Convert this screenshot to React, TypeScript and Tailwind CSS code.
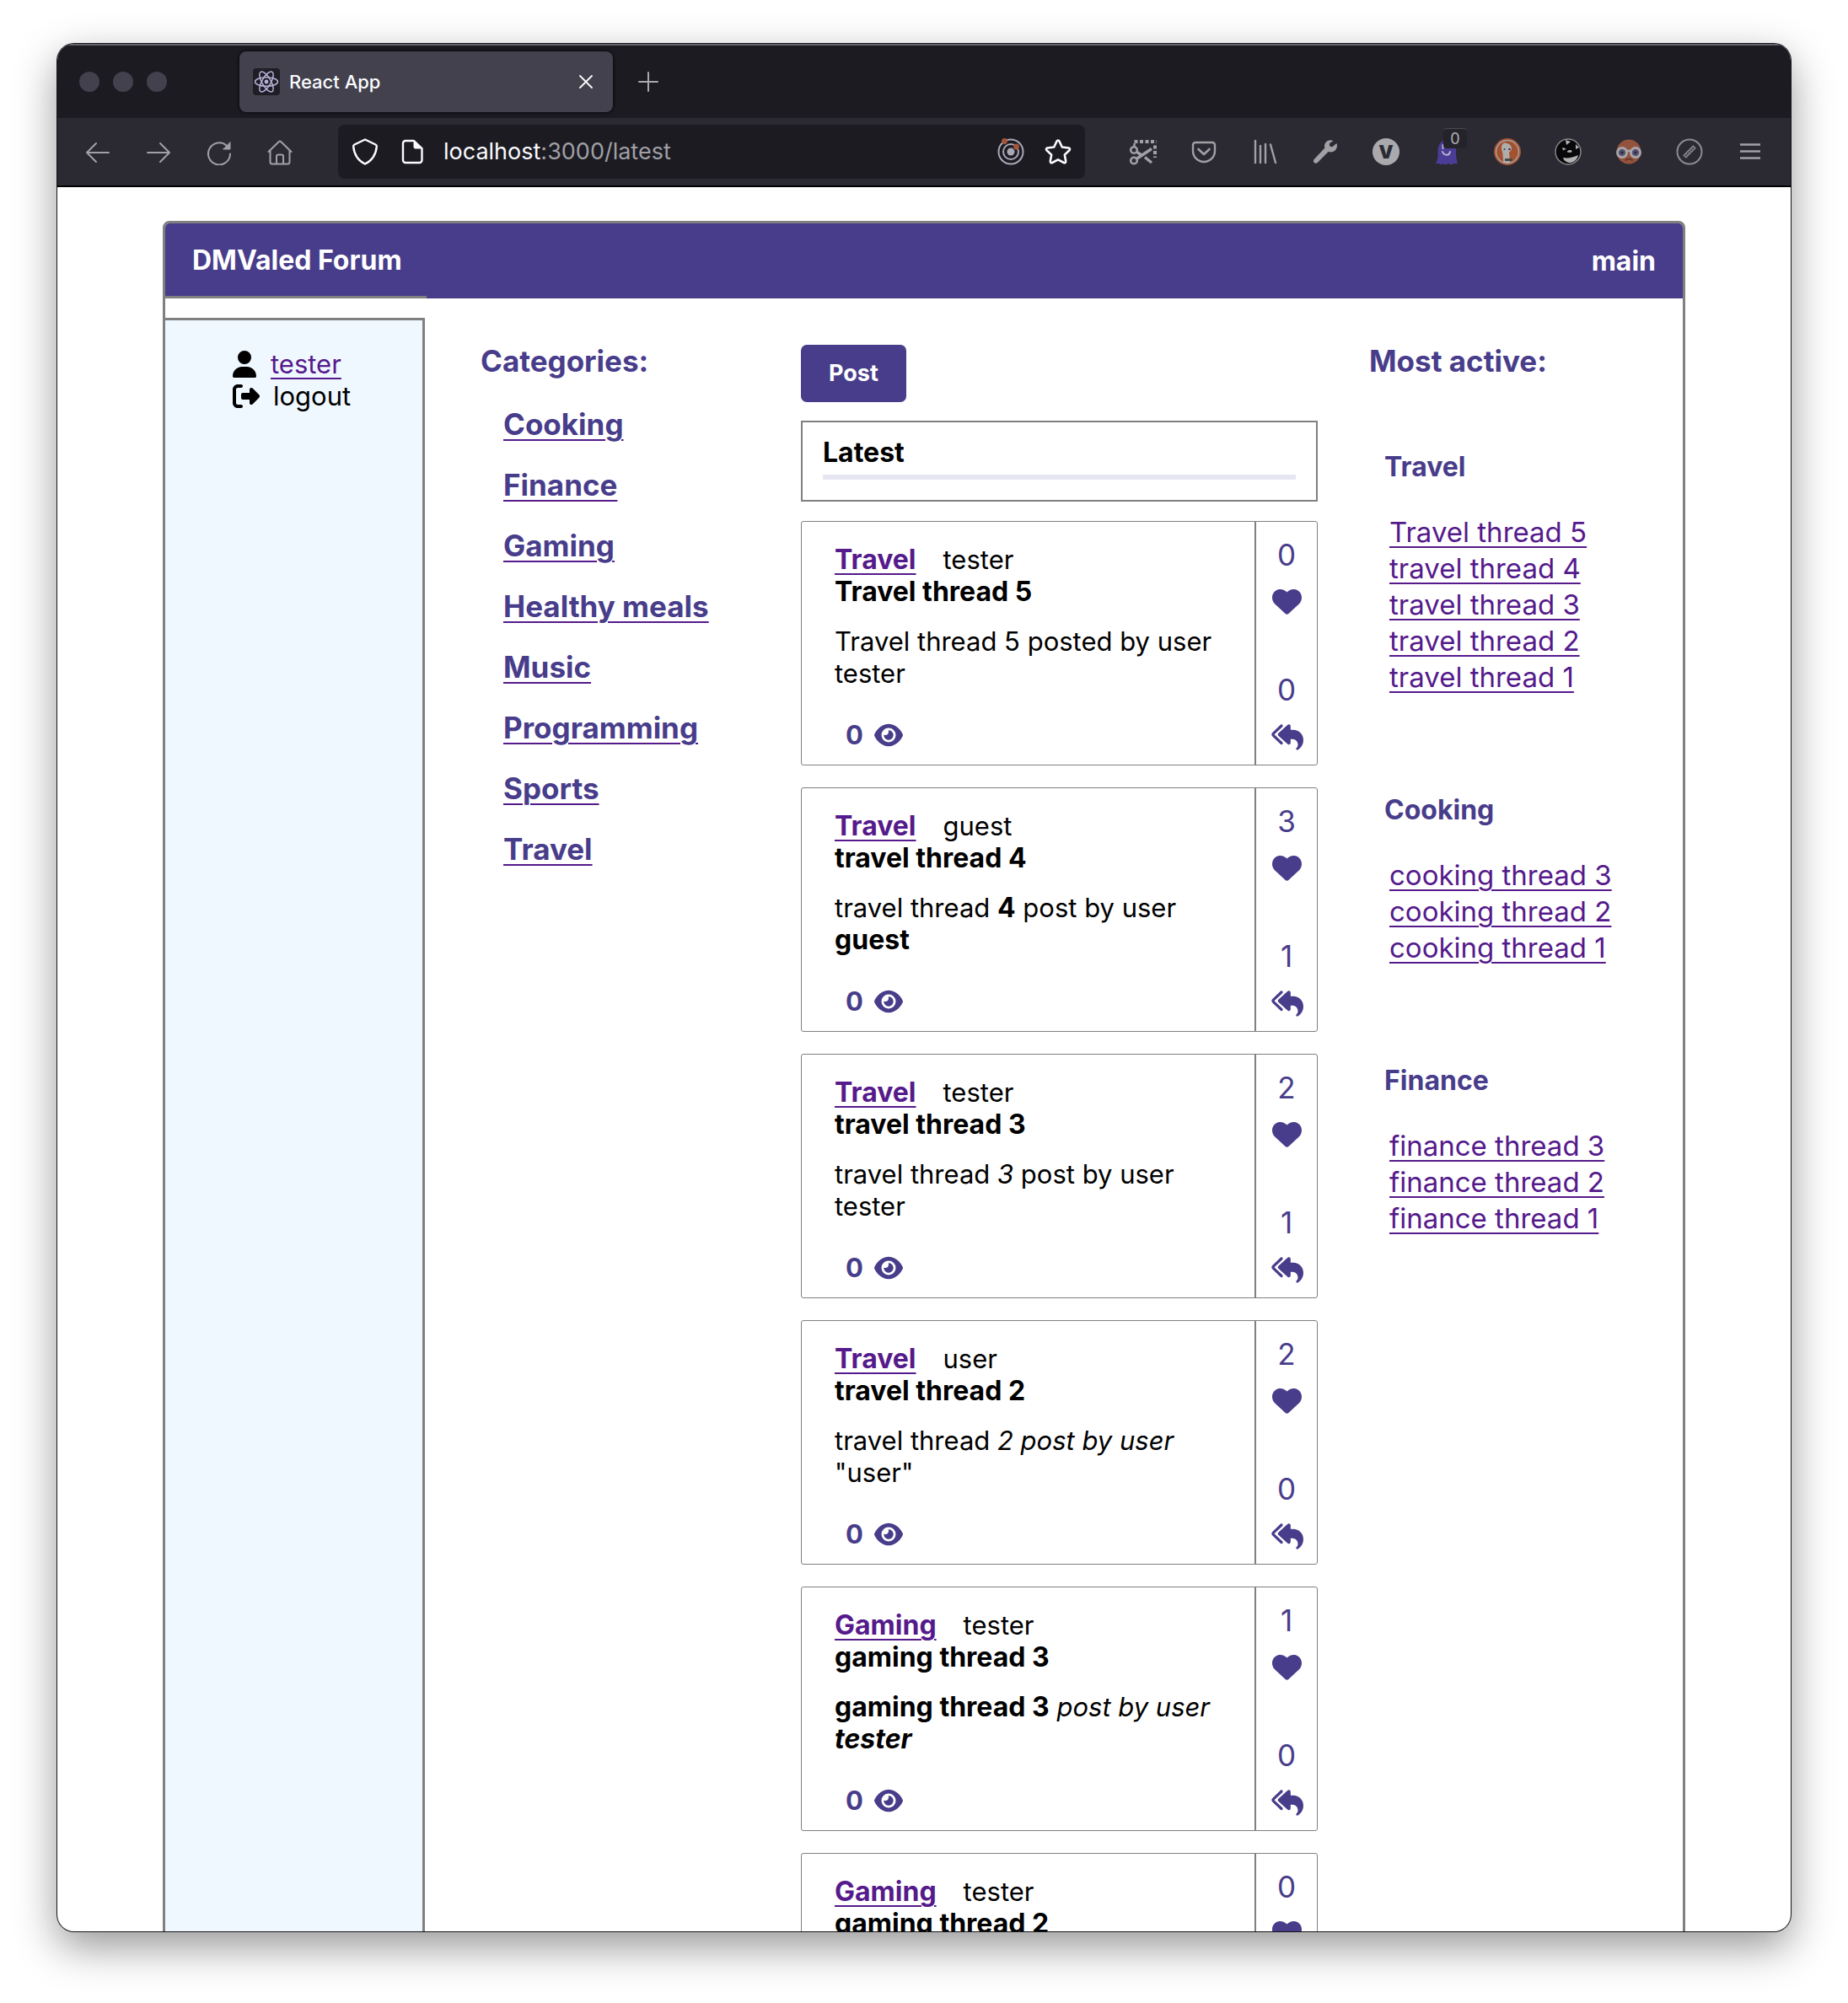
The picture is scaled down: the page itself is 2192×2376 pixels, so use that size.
import type { ReactNode } from "react";
import { FaEye, FaHeart, FaReplyAll, FaRightFromBracket, FaUser } from "react-icons/fa6";

/* ---------- browser icons ---------- */

function Icon({ children, className = "" }: { children: ReactNode; className?: string }) {
  return (
    <svg
      viewBox="0 0 32 32"
      className={`size-8 shrink-0 ${className}`}
      fill="none"
      stroke="currentColor"
      strokeWidth="2"
      strokeLinecap="round"
      strokeLinejoin="round"
      aria-hidden="true"
    >
      {children}
    </svg>
  );
}

const ReactLogo = () => (
  <span className="flex size-8 shrink-0 items-center justify-center rounded bg-[#1f1e26] text-[#b9b1d8]">
    <svg viewBox="0 0 32 32" className="size-8" fill="none" stroke="currentColor" strokeWidth="1.5" aria-hidden="true">
      <ellipse cx="16" cy="16" rx="13.5" ry="5.2" />
      <ellipse cx="16" cy="16" rx="13.5" ry="5.2" transform="rotate(60 16 16)" />
      <ellipse cx="16" cy="16" rx="13.5" ry="5.2" transform="rotate(120 16 16)" />
      <circle cx="16" cy="16" r="2.4" fill="currentColor" stroke="none" />
    </svg>
  </span>
);

const BackIcon = () => (
  <Icon>
    <path d="M29 17H3M14 6 3 17l11 11" />
  </Icon>
);
const ForwardIcon = () => (
  <Icon>
    <path d="M3 17h26M18 6l11 11-11 11" />
  </Icon>
);
const ReloadIcon = () => (
  <Icon>
    <path d="M29 18.5A13 13 0 1 1 25 9" />
    <path d="M29 5v8h-8z" fill="currentColor" strokeWidth="1" />
  </Icon>
);
const HomeIcon = () => (
  <Icon>
    <path d="M2.5 16 14.6 4.200a2 2 0 0 1 2.800 0L29.500 16M4.500 14v14a2.500 2.500 0 0 0 2.500 2.500h18A2.500 2.500 0 0 0 27.500 28V14" />
    <path d="M12 30v-8.500a2 2 0 0 1 2-2h4a2 2 0 0 1 2 2V30" />
  </Icon>
);
const ShieldIcon = () => (
  <Icon className="text-[#fbfbfe]">
    <path strokeWidth="2.400" d="M16 1.500 28.500 7.500c1 .5 1.500 1.200 1.300 2.300C29 18.500 26 25.500 16 30.500 6 25.500 3 18.500 2.200 9.800 2 8.700 2.500 8 3.500 7.500z" />
  </Icon>
);
const PageIcon = () => (
  <Icon className="text-[#fbfbfe]">
    <path strokeWidth="2.400" d="M18 3H8a3 3 0 0 0-3 3v20a3 3 0 0 0 3 3h16.500a3 3 0 0 0 3-3V12z" />
    <path d="M18 3v7.500a1.500 1.500 0 0 0 1.500 1.500h8z" fill="currentColor" strokeWidth="1" />
  </Icon>
);
const ContainerIcon = () => (
  <Icon className="text-[#a9a7b6]">
    <circle cx="16" cy="16" r="14.500" />
    <circle cx="16" cy="16" r="9" />
    <circle cx="16" cy="16" r="4.500" fill="currentColor" stroke="none" />
    <circle cx="8.500" cy="3.500" r="3.400" fill="#a4553a" stroke="none" />
    <circle cx="22.500" cy="10" r="3.400" fill="#a4553a" stroke="none" />
  </Icon>
);
const StarIcon = () => (
  <Icon className="text-[#fbfbfe]">
    <path
      strokeWidth="2.600"
      d="M16 2.500c.7 0 1.200.4 1.500 1l3.300 7 7.800 1c1.400.2 1.900 1.700.9 2.700l-5.700 5.400 1.400 7.700c.2 1.400-1.100 2.300-2.300 1.700L16 25.300 9.100 29c-1.200.6-2.500-.3-2.300-1.700l1.400-7.700-5.700-5.400c-1-1-.5-2.500.9-2.700l7.800-1 3.300-7c.3-.6.8-1 1.500-1z"
    />
  </Icon>
);
const ScreenshotIcon = () => (
  <Icon>
    <path strokeWidth="4" strokeLinecap="butt" strokeDasharray="4 2.500" d="M5.500 4H32" />
    <path strokeWidth="4" strokeLinecap="butt" strokeDasharray="4 2.500" d="M30 8.500V23" />
    <path strokeWidth="2.500" strokeLinecap="butt" d="M5.500 6v3.500" />
    <circle cx="5" cy="14" r="3.800" strokeWidth="2.600" />
    <circle cx="5" cy="26.500" r="3.800" strokeWidth="2.600" />
    <path strokeWidth="3.400" strokeLinecap="butt" d="M8 24.500 26 12.500M8 16l6 4M18 22.500l8 6.500" />
  </Icon>
);
const PocketIcon = () => (
  <Icon>
    <path strokeWidth="2.400" d="M6 5h20a3 3 0 0 1 3 3v7a13 13 0 0 1-26 0V8a3 3 0 0 1 3-3z" />
    <path strokeWidth="2.600" d="m9.500 13 6.500 6 6.500-6" />
  </Icon>
);
const LibraryIcon = () => (
  <Icon>
    <path strokeWidth="2.400" d="M5 3v26M11 9v20M17 7v22M23 7.500l6 21.500" />
  </Icon>
);
const WrenchIcon = () => (
  <Icon>
    <path
      fill="currentColor"
      stroke="none"
      d="M25.500 3.200c-3.300-1.800-7.200-.8-9.200 2-1.400 2-1.600 4.300-.9 6.400L2.700 24.900c-1.100 1.100-1.100 2.900 0 4s2.900 1.100 4 0L19.600 16c3.200 1.100 7 .1 9-2.800 1.500-2.100 1.800-4.900.8-7.200L24.300 10.200l-3.400-.9.300-3.600z"
    />
  </Icon>
);
const VIcon = () => (
  <span className="flex size-8 items-center justify-center rounded-full bg-[#a9a9ae] text-[22px] leading-none font-black text-[#2b2a33]">
    V
  </span>
);
const GhostIcon = () => (
  <span className="relative block size-8">
    <Icon>
      <path
        fill="#4b3d96"
        stroke="none"
        d="M13 2C8 5 5.500 9.500 5.500 15v6c0 4-1.500 6.500-2.500 9h4l2 1.500 3-1.500 2 1.500 4-1.500 4 1.500 2-1.500h5c-1.500-5-2-8-2-13V10c-2-6-6-9-14-8z"
      />
      <path d="M11 16c2 5 8 5 9 0" stroke="#b7b4d0" strokeWidth="2" />
      <path d="M11.500 8v4" stroke="#b7b4d0" />
    </Icon>
    <span className="absolute -top-3 left-3 flex h-6 w-7 items-center justify-center rounded border-t border-[#4a4953] bg-[#24232b] text-lg leading-none text-[#b1b1b3]">
      0
    </span>
  </span>
);
const DuckIcon = () => (
  <Icon>
    <circle cx="16" cy="16" r="16" fill="#a4512f" stroke="none" />
    <circle cx="16" cy="16" r="13.500" stroke="#a5a2a2" strokeWidth="1.500" />
    <path
      fill="#b0aead"
      stroke="none"
      d="M9.500 8.500c1-2.500 3-3.500 5-2.500 4 0 6.500 3 6.500 6.500 0 2-1.500 3-3 4 .5 4 .5 8 1 12.500-2.500.9-5.500.6-7.500-.3-1-5-.6-9.200-1.500-12.700-1-2.500-1.500-5-.5-7.500z"
    />
    <circle cx="18.500" cy="13" r="1.300" fill="#3d3466" stroke="none" />
    <circle cx="12.500" cy="13" r="1" fill="#3d3466" stroke="none" />
    <path d="M13 25.500h9" stroke="#4c4a45" strokeWidth="3" strokeLinecap="butt" />
  </Icon>
);
const BadgerIcon = () => (
  <Icon>
    <circle cx="16" cy="16" r="15" fill="#08080b" stroke="#8b8b90" strokeWidth="1.400" />
    <path
      fill="#b1b1b3"
      stroke="none"
      d="m13 2 6 2-5 4zM25 7l4 4-4 2zM9 11l5 1.500-4 2zM14.500 16c2-3 7-2.500 6 .2-2 1-5 1-6-.2zM10 23c6 1 11 0 18-3-1 5-5 8.500-9 9-4 0-8-2-9-6z"
    />
  </Icon>
);
const GlassesIcon = () => (
  <Icon>
    <circle cx="16" cy="16" r="14.500" fill="#94533d" stroke="none" />
    <circle cx="8" cy="17" r="5.600" fill="#5a5670" stroke="#a9a9ae" strokeWidth="2.600" />
    <circle cx="24" cy="17" r="5.600" fill="#5a5670" stroke="#a9a9ae" strokeWidth="2.600" />
    <path d="M13.500 15.500c1.500-1 3.500-1 5 0" stroke="#a9a9ae" strokeWidth="2.400" />
    <circle cx="8" cy="17" r="1.800" fill="#2b2a4a" stroke="none" />
    <circle cx="24" cy="17" r="1.800" fill="#2b2a4a" stroke="none" />
    <path d="M12 26c2-2 6-2 8 0" stroke="#5c2f22" strokeWidth="1.500" />
  </Icon>
);
const PencilCircleIcon = () => (
  <Icon className="text-[#8c8c92]">
    <circle cx="16" cy="16" r="14.500" />
    <path strokeWidth="5" strokeLinecap="butt" d="M10 22 22 10" />
    <path strokeWidth="2" stroke="#2b2a33" strokeLinecap="butt" strokeDasharray="2 1" d="m11 21 10-10" />
  </Icon>
);
const MenuIcon = () => (
  <Icon>
    <path strokeWidth="2.600" strokeLinecap="butt" d="M4 7.500h24M4 15.500h24M4 23.500h24" />
  </Icon>
);

function ChromeButton({ label, children }: { label: string; children: ReactNode }) {
  return (
    <button type="button" aria-label={label} className="flex size-8 shrink-0 items-center justify-center">
      {children}
    </button>
  );
}

function TabStrip() {
  return (
    <div className="flex h-[88px] shrink-0 items-center border-t-2 border-[#66656d] bg-[#1c1b22] pl-[26px] text-[#a9a9ae]">
      <div className="flex gap-4">
        <span className="size-6 rounded-full bg-[#42414d]" />
        <span className="size-6 rounded-full bg-[#42414d]" />
        <span className="size-6 rounded-full bg-[#42414d]" />
      </div>
      <div className="ml-[86px] flex h-[72px] w-[443px] items-center rounded-lg bg-[#42414d] px-4 shadow-[0_0_4px_#000]">
        <ReactLogo />
        <span className="ml-[11px] flex-1 text-[22px] leading-8 font-medium text-[#fbfbfe]">React App</span>
        <button type="button" aria-label="Close tab" className="flex size-8 items-center justify-center text-[#fbfbfe]">
          <svg viewBox="0 0 16 16" className="size-4" stroke="currentColor" strokeWidth="1.800" strokeLinecap="round" aria-hidden="true">
            <path d="M1 1l14 14M15 1 1 15" />
          </svg>
        </button>
      </div>
      <button type="button" aria-label="New tab" className="ml-[30px] flex size-6 items-center justify-center">
        <svg viewBox="0 0 24 24" className="size-6" stroke="currentColor" strokeWidth="2" strokeLinecap="round" aria-hidden="true">
          <path d="M12 1v22M1 12h22" />
        </svg>
      </button>
    </div>
  );
}

function Toolbar() {
  return (
    <div className="flex h-[82px] shrink-0 items-center border-b-2 border-black bg-[#2b2a33] px-8 text-[#a0a0a5]">
      <div className="flex gap-10">
        <ChromeButton label="Back"><BackIcon /></ChromeButton>
        <ChromeButton label="Forward"><ForwardIcon /></ChromeButton>
        <ChromeButton label="Reload"><ReloadIcon /></ChromeButton>
        <ChromeButton label="Home"><HomeIcon /></ChromeButton>
      </div>
      <div className="mx-[53px] flex h-16 flex-1 items-center rounded-lg bg-[#1c1b22] px-4">
        <div className="flex gap-6">
          <ShieldIcon />
          <PageIcon />
        </div>
        <a href="#latest" className="ml-[21px] flex-1 text-[27px] leading-8">
          <span className="text-[#fbfbfe]">localhost</span>:3000/latest
        </a>
        <div className="flex gap-6">
          <ChromeButton label="Containers"><ContainerIcon /></ChromeButton>
          <ChromeButton label="Bookmark this page"><StarIcon /></ChromeButton>
        </div>
      </div>
      <div className="flex gap-10">
        <ChromeButton label="Screenshot"><ScreenshotIcon /></ChromeButton>
        <ChromeButton label="Pocket"><PocketIcon /></ChromeButton>
        <ChromeButton label="Library"><LibraryIcon /></ChromeButton>
        <ChromeButton label="Developer tools"><WrenchIcon /></ChromeButton>
        <ChromeButton label="Vimium"><VIcon /></ChromeButton>
        <ChromeButton label="Ghostery"><GhostIcon /></ChromeButton>
        <ChromeButton label="DuckDuckGo"><DuckIcon /></ChromeButton>
        <ChromeButton label="Privacy Badger"><BadgerIcon /></ChromeButton>
        <ChromeButton label="Reader"><GlassesIcon /></ChromeButton>
        <ChromeButton label="Annotate"><PencilCircleIcon /></ChromeButton>
        <ChromeButton label="Menu"><MenuIcon /></ChromeButton>
      </div>
    </div>
  );
}

/* ---------- forum ---------- */

const categories = ["Cooking", "Finance", "Gaming", "Healthy meals", "Music", "Programming", "Sports", "Travel"];

type Thread = { category: string; author: string; title: string; body: ReactNode; likes: number; replies: number };

const Bold = ({ children }: { children: ReactNode }) => <b className="text-[32px] font-bold">{children}</b>;

const threads: Thread[] = [
  { category: "Travel", author: "tester", title: "Travel thread 5", body: "Travel thread 5 posted by user tester", likes: 0, replies: 0 },
  {
    category: "Travel",
    author: "guest",
    title: "travel thread 4",
    body: <>travel thread <Bold>4</Bold> post by user <Bold>guest</Bold></>,
    likes: 3,
    replies: 1,
  },
  { category: "Travel", author: "tester", title: "travel thread 3", body: <>travel thread <i>3</i> post by user tester</>, likes: 2, replies: 1 },
  { category: "Travel", author: "user", title: "travel thread 2", body: <>travel thread <i>2 post by user</i> "user"</>, likes: 2, replies: 0 },
  {
    category: "Gaming",
    author: "tester",
    title: "gaming thread 3",
    body: <><Bold>gaming thread 3</Bold> <i>post by user <Bold>tester</Bold></i></>,
    likes: 1,
    replies: 0,
  },
  { category: "Gaming", author: "tester", title: "gaming thread 2", body: "gaming thread 2 post by user tester", likes: 0, replies: 0 },
];

const active = [
  { name: "Travel", items: ["Travel thread 5", "travel thread 4", "travel thread 3", "travel thread 2", "travel thread 1"] },
  { name: "Cooking", items: ["cooking thread 3", "cooking thread 2", "cooking thread 1"] },
  { name: "Finance", items: ["finance thread 3", "finance thread 2", "finance thread 1"] },
];

function ThreadCard({ t }: { t: Thread }) {
  return (
    <article className="flex rounded-[3px] border border-[#808080] text-[31px] leading-[38px]">
      <div className="min-w-0 flex-1 pt-[26px] pr-9 pb-4 pl-[39px]">
        <div className="flex gap-8">
          <a href="#category" className="text-[32px] font-bold text-[#551a8b] underline decoration-2 underline-offset-[5px]">
            {t.category}
          </a>
          <span>{t.author}</span>
        </div>
        <h3 className="text-[32px] font-bold">{t.title}</h3>
        <p className="mt-[21px]">{t.body}</p>
        <div className="mt-[35px] flex items-center gap-[13px] pl-[13px] font-bold text-[#483d8b]">
          0
          <FaEye className="size-[34px]" aria-label="views" />
        </div>
      </div>
      <div className="flex w-[74px] shrink-0 flex-col items-center border-l-2 border-[#808080] pt-[18px] text-[35px] leading-[42px] text-[#483d8b]">
        <span>{t.likes}</span>
        <button type="button" aria-label="Like" className="mt-[17px] mb-[66px]">
          <FaHeart className="size-[35px]" />
        </button>
        <span>{t.replies}</span>
        <button type="button" aria-label="Reply" className="mt-[18px]">
          <FaReplyAll className="h-[35px] w-[39px]" />
        </button>
      </div>
    </article>
  );
}

function Forum() {
  return (
    <div className="rounded-t-lg border-[3px] border-[#808080] bg-white text-black">
      <header className="grid grid-cols-[310fr_1490fr] rounded-t-[5px] bg-[#483d8b] text-[32px] leading-[38px] font-bold text-white">
        <h1 className="border-b-[3px] border-[#808080] pt-[25px] pb-[23px] pl-8">DMValed Forum</h1>
        <a href="#main" className="self-center justify-self-end pr-8">
          main
        </a>
      </header>
      <div className="grid grid-cols-[310fr_444fr_613fr_433fr]">
        <aside className="mt-[23px] mr-0.5 border-t-[3px] border-r-[3px] border-[#808080] bg-[#f0f8ff] pt-[33px] pl-20 text-[31px] leading-[38px]">
          <div className="flex items-center gap-[17px]">
            <FaUser className="h-8 w-7" />
            <a href="#profile" className="text-[#551a8b] underline decoration-2 underline-offset-[5px]">
              tester
            </a>
          </div>
          <button type="button" className="flex items-center gap-4">
            <FaRightFromBracket className="size-8" />
            logout
          </button>
        </aside>

        <nav className="pt-[53px] pl-16 text-[35px] leading-[42px] font-bold text-[#483d8b]">
          <h2>Categories:</h2>
          <ul className="mt-[33px] space-y-[30px] pl-[27px]">
            {categories.map((c) => (
              <li key={c}>
                <a href="#category" className="underline decoration-[#551a8b] decoration-2 underline-offset-[5px]">
                  {c}
                </a>
              </li>
            ))}
          </ul>
        </nav>

        <main className="pt-[55px]">
          <button type="button" className="block h-[68px] rounded-[7px] bg-[#483d8b] px-[33px] text-[27px] leading-8 font-bold text-white">
            Post
          </button>
          <section className="mt-[22px] border-2 border-[#808080] px-6 pt-[17px] pb-6">
            <h2 className="border-b-[6px] border-[#e6e6f2] pb-[7px] text-[32px] leading-[38px] font-bold">Latest</h2>
          </section>
          <div className="mt-[23px] space-y-[26px]">
            {threads.map((t) => (
              <ThreadCard key={t.title} t={t} />
            ))}
          </div>
        </main>

        <section className="pt-[53px] pl-[61px]">
          <h2 className="text-[35px] leading-[42px] font-bold text-[#483d8b]">Most active:</h2>
          <div className="mt-[86px] space-y-[117px] pl-[18px]">
            {active.map((g) => (
              <div key={g.name}>
                <h3 className="text-[32px] leading-[38px] font-bold text-[#483d8b]">{g.name}</h3>
                <ul className="mt-[37px] pl-1.5 text-[33px] leading-[43px]">
                  {g.items.map((i) => (
                    <li key={i}>
                      <a href="#thread" className="text-[#551a8b] underline decoration-2 underline-offset-[5px]">
                        {i}
                      </a>
                    </li>
                  ))}
                </ul>
              </div>
            ))}
          </div>
        </section>
      </div>
    </div>
  );
}

export default function App() {
  return (
    <div className="h-screen overflow-hidden bg-white px-[68px] pt-[52px] pb-[85px] font-['Inter',sans-serif]">
      <div className="flex h-full flex-col overflow-hidden rounded-[20px] bg-white shadow-[0_0_0_1px_#15141a,0_18px_50px_rgba(0,0,0,0.42)]">
        <TabStrip />
        <Toolbar />
        <div className="min-h-0 flex-1 overflow-hidden px-[125px] pt-10">
          <Forum />
        </div>
      </div>
    </div>
  );
}
